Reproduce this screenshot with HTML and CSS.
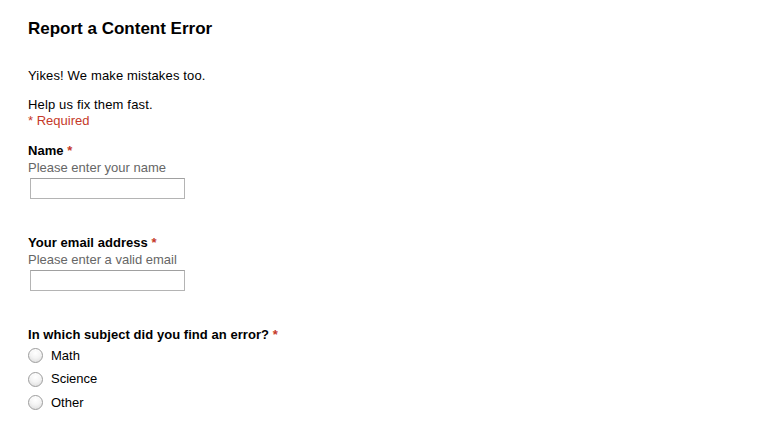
FILE: index.html
```html
<!DOCTYPE html>
<html>
<head>
<meta charset="utf-8">
<link rel="stylesheet" href="styles.css">
</head>
<body>
<div class="form">
  <h1 class="title">Report a Content Error</h1>
  <p class="desc">Yikes! We make mistakes too.</p>
  <p class="desc">Help us fix them fast.<br><span class="req-note">* Required</span></p>

  <div class="item">
    <label class="label">Name <span class="star">*</span></label>
    <div class="help">Please enter your name</div>
    <input class="text" type="text">
  </div>

  <div class="item">
    <label class="label">Your email address <span class="star">*</span></label>
    <div class="help">Please enter a valid email</div>
    <input class="text" type="text">
  </div>

  <div class="item">
    <div class="label">In which subject did you find an error? <span class="star">*</span></div>
    <div class="choices">
      <label class="choice"><input class="radio" type="radio" name="s"><span>Math</span></label>
      <label class="choice"><input class="radio" type="radio" name="s"><span>Science</span></label>
      <label class="choice"><input class="radio" type="radio" name="s"><span>Other</span></label>
    </div>
  </div>
</div>
</body>
</html>
```
FILE: styles.css
```css
html, body {
  margin: 0;
  padding: 0;
  background: #fff;
}
body {
  font-family: "Liberation Sans", Arial, sans-serif;
  font-size: 13px;
  line-height: 16px;
  color: #000;
}
.form {
  padding: 19px 28px 0 28px;
}
.title {
  margin: 0;
  font-size: 17px;
  line-height: 20px;
  font-weight: bold;
}
.desc {
  margin: 29px 0 0 0;
  letter-spacing: 0.15px;
}
.desc + .desc {
  margin-top: 13px;
}
.req-note {
  color: #c53929;
  letter-spacing: 0;
}
.item {
  margin-top: 14px;
  display: flex;
  flex-direction: column;
  align-items: flex-start;
}
.item + .item {
  margin-top: 36px;
}
.label {
  font-weight: bold;
  display: block;
  letter-spacing: 0.05px;
}
.star {
  color: #c53929;
}
.help {
  color: #666;
  margin-top: 1px;
}
.text {
  box-sizing: border-box;
  width: 155px;
  height: 21px;
  margin: 2px 0 0 2px;
  padding: 2px 4px;
  border: 1px solid #b4b4b4;
  border-top-color: #a0a0a0;
  background: #fff;
  font: inherit;
  outline: none;
}
.item + .item .text {
  margin-top: 2px;
}
.choices {
  margin-top: 1px;
  display: flex;
  flex-direction: column;
}
.choice {
  display: flex;
  align-items: center;
  height: 23.5px;
}
.radio {
  -webkit-appearance: none;
  appearance: none;
  box-sizing: border-box;
  width: 15px;
  height: 15px;
  margin: 0 8px 0 0;
  border-radius: 50%;
  border: 1px solid #9d9d9d;
  background: radial-gradient(circle at 50% 30%, #ffffff 0%, #f4f4f4 45%, #d8d8d8 100%);
  box-shadow: inset 0 1px 1px rgba(255,255,255,0.8);
}
```
